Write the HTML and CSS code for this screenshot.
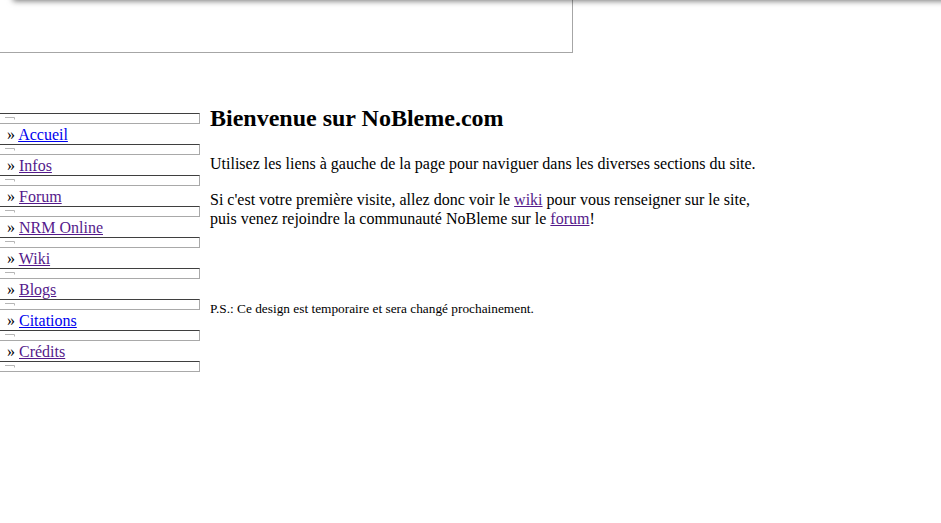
FILE: index.html
```html
<!DOCTYPE html>
<html lang="fr">
<head>
<meta charset="utf-8">
<title>NoBleme.com</title>
<link rel="stylesheet" href="styles.css">
</head>
<body>
<div class="topshadow"></div>
<div class="banner"></div>
<div class="layout">
  <nav class="menu">
    <div class="sep"><svg width="10" height="3" viewBox="0 0 10 3"><path d="M0 0.5H9.5V2.5" fill="none" stroke="#b5b5b5" stroke-width="1"/></svg></div>
    <div class="item">» <a href="#" class="new">Accueil</a></div>
    <div class="sep"><svg width="10" height="3" viewBox="0 0 10 3"><path d="M0 0.5H9.5V2.5" fill="none" stroke="#b5b5b5" stroke-width="1"/></svg></div>
    <div class="item">» <a href="#">Infos</a></div>
    <div class="sep"><svg width="10" height="3" viewBox="0 0 10 3"><path d="M0 0.5H9.5V2.5" fill="none" stroke="#b5b5b5" stroke-width="1"/></svg></div>
    <div class="item">» <a href="#">Forum</a></div>
    <div class="sep"><svg width="10" height="3" viewBox="0 0 10 3"><path d="M0 0.5H9.5V2.5" fill="none" stroke="#b5b5b5" stroke-width="1"/></svg></div>
    <div class="item">» <a href="#">NRM Online</a></div>
    <div class="sep"><svg width="10" height="3" viewBox="0 0 10 3"><path d="M0 0.5H9.5V2.5" fill="none" stroke="#b5b5b5" stroke-width="1"/></svg></div>
    <div class="item">» <a href="#">Wiki</a></div>
    <div class="sep"><svg width="10" height="3" viewBox="0 0 10 3"><path d="M0 0.5H9.5V2.5" fill="none" stroke="#b5b5b5" stroke-width="1"/></svg></div>
    <div class="item">» <a href="#">Blogs</a></div>
    <div class="sep"><svg width="10" height="3" viewBox="0 0 10 3"><path d="M0 0.5H9.5V2.5" fill="none" stroke="#b5b5b5" stroke-width="1"/></svg></div>
    <div class="item">» <a href="#" class="new">Citations</a></div>
    <div class="sep"><svg width="10" height="3" viewBox="0 0 10 3"><path d="M0 0.5H9.5V2.5" fill="none" stroke="#b5b5b5" stroke-width="1"/></svg></div>
    <div class="item">» <a href="#">Crédits</a></div>
    <div class="sep"><svg width="10" height="3" viewBox="0 0 10 3"><path d="M0 0.5H9.5V2.5" fill="none" stroke="#b5b5b5" stroke-width="1"/></svg></div>
  </nav>
  <main class="content">
    <h1>Bienvenue sur NoBleme.com</h1>
    <p>Utilisez les liens à gauche de la page pour naviguer dans les diverses sections du site.</p>
    <p>Si c'est votre première visite, allez donc voir le <a href="#">wiki</a> pour vous renseigner sur le site,<br>puis venez rejoindre la communauté NoBleme sur le <a href="#">forum</a>!</p>
    <p class="ps">P.S.: Ce design est temporaire et sera changé prochainement.</p>
  </main>
</div>
</body>
</html>
```
FILE: styles.css
```css
html, body {
  margin: 0;
  padding: 0;
  background: #ffffff;
}
body {
  font-family: "Liberation Serif", "Times New Roman", serif;
  font-size: 16px;
  color: #000000;
  position: relative;
  overflow: hidden;
  height: 523px;
}
.topshadow {
  position: absolute;
  top: -20px;
  left: 14px;
  right: -20px;
  height: 20px;
  box-shadow: 0 0 6px 1px rgba(0, 0, 0, 0.55);
  background: #fff;
}
.banner {
  width: 572px;
  height: 52px;
  border-right: 1px solid #a6a6a6;
  border-bottom: 1px solid #a6a6a6;
}
.layout {
  display: flex;
  align-items: flex-start;
}
.menu {
  width: 200px;
  margin-top: 60px;
  flex: none;
}
.sep {
  box-sizing: border-box;
  width: 200px;
  height: 11px;
  border-top: 1px solid #3f3f3f;
  border-right: 1px solid #a9a9a9;
  border-bottom: 1px solid #a9a9a9;
  padding: 3px 0 0 5px;
  line-height: 0;
}
.sep svg {
  display: block;
}
.item {
  box-sizing: border-box;
  height: 20px;
  padding-top: 2px;
  line-height: 18px;
  padding-left: 7px;
  white-space: nowrap;
}
a {
  color: #551a8b;
}
a.new {
  color: #0000ee;
}
.content {
  margin-left: 10px;
  padding-top: 51px;
}
h1 {
  font-size: 24px;
  font-weight: bold;
  margin: 0 0 22px 0;
  line-height: 28px;
}
p {
  margin: 0 0 17px 0;
  line-height: 19px;
}
.ps {
  font-size: 13.333px;
  margin-top: 73px;
  line-height: 16px;
}
```
